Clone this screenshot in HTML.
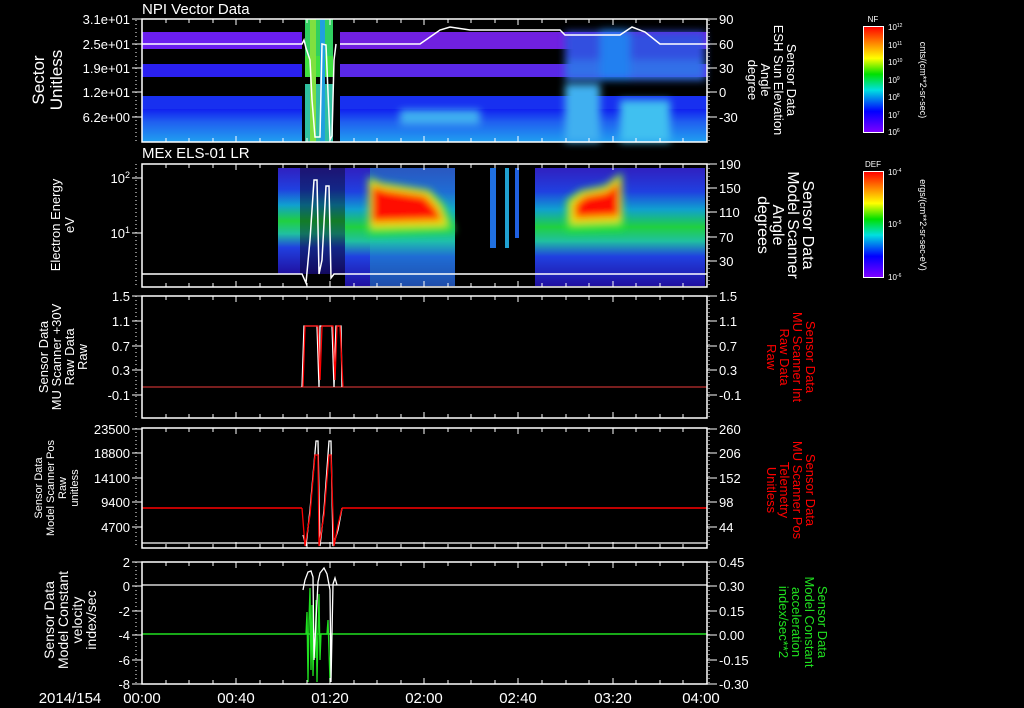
<!DOCTYPE html>
<html><head><meta charset="utf-8"><style>
html,body{margin:0;padding:0;background:#000;}
svg{display:block}
text{font-family:"Liberation Sans",sans-serif;fill:#fff}
text.r{fill:#f00}
text.g{fill:#20e020}
</style></head><body>
<svg width="1024" height="708" viewBox="0 0 1024 708" xmlns="http://www.w3.org/2000/svg">
<defs>
<linearGradient id="rb" x1="0" y1="0" x2="0" y2="1">
<stop offset="0" stop-color="#ff0000"/><stop offset="0.15" stop-color="#ff8000"/><stop offset="0.3" stop-color="#ffff00"/><stop offset="0.45" stop-color="#00e000"/><stop offset="0.6" stop-color="#00e0e0"/><stop offset="0.8" stop-color="#0000ff"/><stop offset="1" stop-color="#8000ff"/>
</linearGradient>
<linearGradient id="p1low" x1="0" y1="0" x2="0" y2="1">
<stop offset="0" stop-color="#1020f0"/><stop offset="0.4" stop-color="#2060f0"/><stop offset="1" stop-color="#20a0f0"/>
</linearGradient>
<linearGradient id="p2bg" x1="0" y1="0" x2="0" y2="1">
<stop offset="0" stop-color="#3020c0"/><stop offset="0.2" stop-color="#2040e0"/><stop offset="0.35" stop-color="#10a0d0"/><stop offset="0.5" stop-color="#20d040"/><stop offset="0.62" stop-color="#20c0a0"/><stop offset="0.75" stop-color="#2040e0"/><stop offset="1" stop-color="#2010a0"/>
</linearGradient>
<filter id="bl" x="-20%" y="-20%" width="140%" height="140%"><feGaussianBlur stdDeviation="4"/></filter>
</defs>

<!-- Panel 1 -->
<text x="142" y="14" font-size="15">NPI Vector Data</text>
<g>
<rect x="142" y="32" width="160" height="17" fill="#6a1ef0"/>
<rect x="142" y="64" width="160" height="13" fill="#2a20f0"/>
<rect x="142" y="96" width="160" height="13" fill="#1830f0"/>
<rect x="142" y="109" width="160" height="33" fill="url(#p1low)"/>
<rect x="305" y="19" width="28" height="37" fill="#30d060"/>
<rect x="305" y="56" width="28" height="21" fill="#40e040"/>
<rect x="305" y="84" width="28" height="58" fill="#30c0a0"/>
<rect x="310" y="19" width="6" height="123" fill="#80e040"/>
<rect x="320" y="19" width="5" height="123" fill="#20a0e0"/>
<rect x="340" y="32" width="367" height="17" fill="#7020e0"/>
<rect x="340" y="64" width="367" height="13" fill="#5a28e8"/>
<rect x="340" y="96" width="367" height="13" fill="#1830f0"/>
<rect x="340" y="109" width="367" height="33" fill="url(#p1low)"/>
<g filter="url(#bl)">
<rect x="565" y="32" width="140" height="28" fill="#3050e0"/>
<rect x="565" y="60" width="140" height="20" fill="#3070e8"/>
<rect x="565" y="84" width="35" height="58" fill="#40b0f0"/>
<rect x="600" y="30" width="30" height="50" fill="#2080f0"/>
<rect x="620" y="100" width="50" height="42" fill="#40c0f0"/>
<rect x="400" y="110" width="80" height="15" fill="#40b0f0"/>
</g>
</g>
<polyline fill="none" stroke="#fff" stroke-width="1.5" points="142,44 302,44 304,40 306,48 310,60 312,100 315,137 320,137 322,44 326,45 330,140 332,136 334,60 336,44"/>
<polyline fill="none" stroke="#fff" stroke-width="1.5" points="340,44 420,44 440,30 450,27 470,30 560,30 565,35 620,35 632,27 645,32 660,44 707,44"/>
<rect x="142" y="19" width="565" height="123" stroke="#fff" stroke-width="1.5" fill="none"/>

<!-- Panel 2 -->
<text x="142" y="158" font-size="15">MEx ELS-01 LR</text>
<rect x="278" y="168" width="22" height="106" fill="url(#p2bg)"/>
<rect x="300" y="168" width="45" height="106" fill="url(#p2bg)" opacity="0.6"/>
<rect x="345" y="168" width="110" height="118" fill="url(#p2bg)"/>
<rect x="370" y="168" width="85" height="118" fill="#20c0c0" opacity="0.35"/>
<rect x="490" y="168" width="6" height="80" fill="#2070e0"/>
<rect x="505" y="168" width="4" height="80" fill="#20a0d0"/>
<rect x="515" y="168" width="4" height="70" fill="#2060e0"/>
<rect x="535" y="168" width="170" height="118" fill="url(#p2bg)"/>
<g filter="url(#bl)">
<path d="M368 176 L380 182 L430 190 L445 205 L455 232 L368 236Z" fill="#20e040"/>
<path d="M370 180 L382 185 L428 192 L440 206 L448 226 L370 228Z" fill="#f0e000"/>
<path d="M372 186 L385 190 L425 196 L436 208 L442 220 L372 222Z" fill="#ff1000"/>
<path d="M566 200 L580 190 L605 185 L622 172 L624 230 L566 232Z" fill="#20e040"/>
<path d="M570 202 L582 193 L606 188 L620 176 L621 222 L570 224Z" fill="#f0e000"/>
<path d="M575 204 L585 196 L607 192 L619 182 L619 216 L575 218Z" fill="#ff1000"/>
</g>
<polyline fill="none" stroke="#fff" stroke-width="1.5" points="142,274 302,274 306,283 310,240 314,180 317,180 319,274 322,260 326,186 329,186 331,278 334,274 707,274"/>
<rect x="142" y="164" width="565" height="123" stroke="#fff" stroke-width="1.5" fill="none"/>

<!-- Panel 3 -->
<line x1="142" y1="387" x2="707" y2="387" stroke="#c03030" stroke-width="1.2"/>
<polyline fill="none" stroke="#fff" stroke-width="1.3" points="302,387 304,326 317,326 319,387 320,326 332,326 334,387 336,326 341,326 342,387"/>
<polyline fill="none" stroke="#f00" stroke-width="1.3" points="303,387 305,326 318,326 320,380 322,326 333,326 335,380 337,326 340,326 343,387"/>
<rect x="142" y="296" width="565" height="122" stroke="#fff" stroke-width="1.5" fill="none"/>

<!-- Panel 4 -->
<line x1="142" y1="543" x2="707" y2="543" stroke="#fff" stroke-width="1.3"/>
<line x1="142" y1="508" x2="302" y2="508" stroke="#f00" stroke-width="1.5"/>
<line x1="342" y1="508" x2="707" y2="508" stroke="#f00" stroke-width="1.5"/>
<polyline fill="none" stroke="#fff" stroke-width="1.3" points="303,535 306,546 310,510 316,441 318,441 320,546 324,510 329,441 331,441 333,546 338,530 342,508"/>
<polyline fill="none" stroke="#f00" stroke-width="1.3" points="302,508 305,546 310,515 315,455 318,455 319,546 324,515 329,455 331,455 334,546 338,525 342,508"/>
<rect x="142" y="428" width="565" height="120" stroke="#fff" stroke-width="1.5" fill="none"/>

<!-- Panel 5 -->
<line x1="142" y1="585" x2="707" y2="585" stroke="#fff" stroke-width="1.3"/>
<line x1="142" y1="634" x2="707" y2="634" stroke="#20e020" stroke-width="1.5"/>
<polyline fill="none" stroke="#20e020" stroke-width="1.3" points="306,634 307,612 308,682 309,620 310,588 311,670 312,605 313,676 314,640 315,658 316,600 317,682 318,634 319,594 320,660 321,634 327,634 328,620 329,650 330,682 331,640 332,634"/>
<polyline fill="none" stroke="#fff" stroke-width="1.3" points="303,590 305,580 308,572 311,571 313,577 314,660 318,582 320,573 324,568 327,574 330,590 331,682 333,584 335,578 337,585"/>
<rect x="142" y="562" width="565" height="122" stroke="#fff" stroke-width="1.5" fill="none"/>

<!-- ticks -->
<g stroke="#fff" stroke-width="1">
<path d="M142 19v6M166 19v4M189 19v4M213 19v4M236 19v6M260 19v4M283 19v4M307 19v4M330 19v6M354 19v4M377 19v4M401 19v4M424 19v6M448 19v4M471 19v4M495 19v4M518 19v6M542 19v4M566 19v4M589 19v4M613 19v6M636 19v4M660 19v4M683 19v4"/>
<path d="M142 142v-6M166 142v-4M189 142v-4M213 142v-4M236 142v-6M260 142v-4M283 142v-4M307 142v-4M330 142v-6M354 142v-4M377 142v-4M401 142v-4M424 142v-6M448 142v-4M471 142v-4M495 142v-4M518 142v-6M542 142v-4M566 142v-4M589 142v-4M613 142v-6M636 142v-4M660 142v-4M683 142v-4" />
<path d="M142 164v6M166 164v4M189 164v4M213 164v4M236 164v6M260 164v4M283 164v4M307 164v4M330 164v6M354 164v4M377 164v4M401 164v4M424 164v6M448 164v4M471 164v4M495 164v4M518 164v6M542 164v4M566 164v4M589 164v4M613 164v6M636 164v4M660 164v4M683 164v4"/>
<path d="M142 287v-6M166 287v-4M189 287v-4M213 287v-4M236 287v-6M260 287v-4M283 287v-4M307 287v-4M330 287v-6M354 287v-4M377 287v-4M401 287v-4M424 287v-6M448 287v-4M471 287v-4M495 287v-4M518 287v-6M542 287v-4M566 287v-4M589 287v-4M613 287v-6M636 287v-4M660 287v-4M683 287v-4"/>
<path d="M142 296v6M166 296v4M189 296v4M213 296v4M236 296v6M260 296v4M283 296v4M307 296v4M330 296v6M354 296v4M377 296v4M401 296v4M424 296v6M448 296v4M471 296v4M495 296v4M518 296v6M542 296v4M566 296v4M589 296v4M613 296v6M636 296v4M660 296v4M683 296v4"/>
<path d="M142 418v-6M166 418v-4M189 418v-4M213 418v-4M236 418v-6M260 418v-4M283 418v-4M307 418v-4M330 418v-6M354 418v-4M377 418v-4M401 418v-4M424 418v-6M448 418v-4M471 418v-4M495 418v-4M518 418v-6M542 418v-4M566 418v-4M589 418v-4M613 418v-6M636 418v-4M660 418v-4M683 418v-4"/>
<path d="M142 428v6M166 428v4M189 428v4M213 428v4M236 428v6M260 428v4M283 428v4M307 428v4M330 428v6M354 428v4M377 428v4M401 428v4M424 428v6M448 428v4M471 428v4M495 428v4M518 428v6M542 428v4M566 428v4M589 428v4M613 428v6M636 428v4M660 428v4M683 428v4"/>
<path d="M142 548v-6M166 548v-4M189 548v-4M213 548v-4M236 548v-6M260 548v-4M283 548v-4M307 548v-4M330 548v-6M354 548v-4M377 548v-4M401 548v-4M424 548v-6M448 548v-4M471 548v-4M495 548v-4M518 548v-6M542 548v-4M566 548v-4M589 548v-4M613 548v-6M636 548v-4M660 548v-4M683 548v-4"/>
<path d="M142 562v6M166 562v4M189 562v4M213 562v4M236 562v6M260 562v4M283 562v4M307 562v4M330 562v6M354 562v4M377 562v4M401 562v4M424 562v6M448 562v4M471 562v4M495 562v4M518 562v6M542 562v4M566 562v4M589 562v4M613 562v6M636 562v4M660 562v4M683 562v4"/>
<path d="M142 684v-6M166 684v-4M189 684v-4M213 684v-4M236 684v-6M260 684v-4M283 684v-4M307 684v-4M330 684v-6M354 684v-4M377 684v-4M401 684v-4M424 684v-6M448 684v-4M471 684v-4M495 684v-4M518 684v-6M542 684v-4M566 684v-4M589 684v-4M613 684v-6M636 684v-4M660 684v-4M683 684v-4"/>
</g>
<g stroke="#fff" stroke-width="1" stroke-dasharray="1 3">
<path d="M136 20V142M707 20V142M709 20V142M136 164V287M707 164V287M709 164V287M136 296V418M707 296V418M709 296V418M136 428V548M707 428V548M709 428V548M136 562V684M707 562V684M709 562V684"/>
</g>
<g stroke="#fff" stroke-width="1">
<path d="M132 19h10M132 44h10M132 68h10M132 92h10M132 117h10M707 19h10M707 44h10M707 68h10M707 92h10M707 117h10"/>
<path d="M132 178h10M132 233h10M707 164h10M707 188h10M707 212h10M707 237h10M707 261h10"/>
<path d="M132 296h10M132 321h10M132 346h10M132 370h10M132 395h10M707 296h10M707 321h10M707 346h10M707 370h10M707 395h10"/>
<path d="M132 429h10M132 453h10M132 478h10M132 502h10M132 527h10M707 429h10M707 453h10M707 478h10M707 502h10M707 527h10"/>
<path d="M132 562h10M132 586h10M132 611h10M132 635h10M132 660h10M132 684h10M707 562h10M707 586h10M707 611h10M707 635h10M707 660h10M707 684h10"/>
</g>

<g font-size="13" text-anchor="end">
<text x="130" y="24">3.1e+01</text><text x="130" y="49">2.5e+01</text><text x="130" y="73">1.9e+01</text><text x="130" y="97">1.2e+01</text><text x="130" y="122">6.2e+00</text>
<text x="130" y="183">10<tspan font-size="9" dy="-5">2</tspan></text><text x="130" y="238">10<tspan font-size="9" dy="-5">1</tspan></text>
<text x="130" y="301">1.5</text><text x="130" y="326">1.1</text><text x="130" y="351">0.7</text><text x="130" y="375">0.3</text><text x="130" y="400">-0.1</text>
<text x="130" y="434">23500</text><text x="130" y="458">18800</text><text x="130" y="483">14100</text><text x="130" y="507">9400</text><text x="130" y="532">4700</text>
<text x="130" y="567">2</text><text x="130" y="591">0</text><text x="130" y="616">-2</text><text x="130" y="640">-4</text><text x="130" y="665">-6</text><text x="130" y="689">-8</text>
</g>
<g font-size="13" text-anchor="start">
<text x="719" y="24">90</text><text x="719" y="49">60</text><text x="719" y="73">30</text><text x="719" y="97">0</text><text x="719" y="122">-30</text>
<text x="719" y="169">190</text><text x="719" y="193">150</text><text x="719" y="217">110</text><text x="719" y="242">70</text><text x="719" y="266">30</text>
<text x="719" y="301">1.5</text><text x="719" y="326">1.1</text><text x="719" y="351">0.7</text><text x="719" y="375">0.3</text><text x="719" y="400">-0.1</text>
<text x="719" y="434">260</text><text x="719" y="458">206</text><text x="719" y="483">152</text><text x="719" y="507">98</text><text x="719" y="532">44</text>
<text x="719" y="567">0.45</text><text x="719" y="591">0.30</text><text x="719" y="616">0.15</text><text x="719" y="640">0.00</text><text x="719" y="665">-0.15</text><text x="719" y="689">-0.30</text>
</g>
<g font-size="15" text-anchor="middle">
<text x="70" y="703">2014/154</text>
<text x="142" y="703">00:00</text><text x="236" y="703">00:40</text><text x="330" y="703">01:20</text><text x="424" y="703">02:00</text><text x="518" y="703">02:40</text><text x="613" y="703">03:20</text><text x="701" y="703">04:00</text>
</g>

<g text-anchor="middle">
<text transform="translate(44,80) rotate(-90)" font-size="17">Sector</text>
<text transform="translate(62,80) rotate(-90)" font-size="17">Unitless</text>
<text transform="translate(60,225) rotate(-90)" font-size="13">Electron Energy</text>
<text transform="translate(74,225) rotate(-90)" font-size="13">eV</text>
<text transform="translate(48,357) rotate(-90)" font-size="13">Sensor Data</text>
<text transform="translate(61,357) rotate(-90)" font-size="13">MU Scanner +30V</text>
<text transform="translate(74,357) rotate(-90)" font-size="13">Raw Data</text>
<text transform="translate(87,357) rotate(-90)" font-size="13">Raw</text>
<text transform="translate(42,488) rotate(-90)" font-size="11">Sensor Data</text>
<text transform="translate(54,488) rotate(-90)" font-size="11">Model Scanner Pos</text>
<text transform="translate(66,488) rotate(-90)" font-size="11">Raw</text>
<text transform="translate(78,488) rotate(-90)" font-size="11">unitless</text>
<text transform="translate(54,620) rotate(-90)" font-size="14">Sensor Data</text>
<text transform="translate(68,620) rotate(-90)" font-size="14">Model Constant</text>
<text transform="translate(82,620) rotate(-90)" font-size="14">velocity</text>
<text transform="translate(96,620) rotate(-90)" font-size="14">index/sec</text>
</g>
<g text-anchor="middle">
<text transform="translate(787,80) rotate(90)" font-size="13">Sensor Data</text>
<text transform="translate(774,80) rotate(90)" font-size="13">ESH Sun Elevation</text>
<text transform="translate(761,80) rotate(90)" font-size="13">Angle</text>
<text transform="translate(748,80) rotate(90)" font-size="13">degree</text>
<text transform="translate(803,225) rotate(90)" font-size="16">Sensor Data</text>
<text transform="translate(788,225) rotate(90)" font-size="16">Model Scanner</text>
<text transform="translate(773,225) rotate(90)" font-size="16">Angle</text>
<text transform="translate(758,225) rotate(90)" font-size="16">degrees</text>
<text class="r" transform="translate(806,357) rotate(90)" font-size="13">Sensor Data</text>
<text class="r" transform="translate(793,357) rotate(90)" font-size="13">MU Scanner Int</text>
<text class="r" transform="translate(780,357) rotate(90)" font-size="13">Raw Data</text>
<text class="r" transform="translate(767,357) rotate(90)" font-size="13">Raw</text>
<text class="r" transform="translate(806,490) rotate(90)" font-size="13">Sensor Data</text>
<text class="r" transform="translate(793,490) rotate(90)" font-size="13">MU Scanner Pos</text>
<text class="r" transform="translate(780,490) rotate(90)" font-size="13">Telemetry</text>
<text class="r" transform="translate(767,490) rotate(90)" font-size="13">Unitless</text>
<text class="g" transform="translate(818,622) rotate(90)" font-size="13">Sensor Data</text>
<text class="g" transform="translate(805,622) rotate(90)" font-size="13">Model Constant</text>
<text class="g" transform="translate(792,622) rotate(90)" font-size="13">acceleration</text>
<text class="g" transform="translate(779,622) rotate(90)" font-size="13">index/sec**2</text>
</g>

<rect x="863.5" y="26.5" width="20" height="106" fill="url(#rb)" stroke="#fff"/>
<text x="873" y="22" font-size="8" text-anchor="middle">NF</text>
<g font-size="8"><text x="888" y="30">10<tspan font-size="5" dy="-3">12</tspan></text><text x="888" y="48">10<tspan font-size="5" dy="-3">11</tspan></text><text x="888" y="65">10<tspan font-size="5" dy="-3">10</tspan></text><text x="888" y="83">10<tspan font-size="5" dy="-3">9</tspan></text><text x="888" y="100">10<tspan font-size="5" dy="-3">8</tspan></text><text x="888" y="118">10<tspan font-size="5" dy="-3">7</tspan></text><text x="888" y="135">10<tspan font-size="5" dy="-3">6</tspan></text></g>
<text transform="translate(920,80) rotate(90)" font-size="9" text-anchor="middle">cnts/(cm**2-sr-sec)</text>
<rect x="863.5" y="171.5" width="20" height="106" fill="url(#rb)" stroke="#fff"/>
<text x="873" y="167" font-size="8" text-anchor="middle">DEF</text>
<g font-size="8"><text x="888" y="175">10<tspan font-size="5" dy="-3">-4</tspan></text><text x="888" y="227">10<tspan font-size="5" dy="-3">-5</tspan></text><text x="888" y="280">10<tspan font-size="5" dy="-3">-6</tspan></text></g>
<text transform="translate(920,225) rotate(90)" font-size="9" text-anchor="middle">ergs/(cm**2-sr-sec-eV)</text>
</svg>
</body></html>
